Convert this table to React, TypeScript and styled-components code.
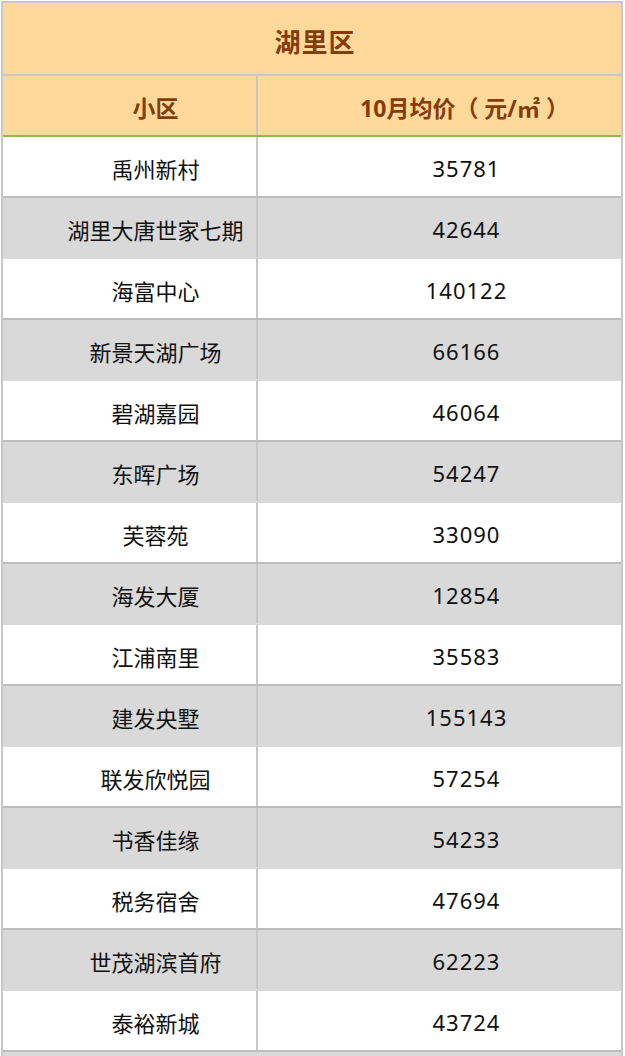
import * as React from 'react';
import styled, { createGlobalStyle } from 'styled-components';

const GlobalStyle = createGlobalStyle`
  html, body {
    margin: 0;
    padding: 0;
    background: #ffffff;
  }
  body {
    font-family: "Noto Sans", "Noto Sans CJK SC", sans-serif;
  }
`;

const PEACH = '#FFD99A';
const BROWN = '#843C0C';
const GRID = '#C8C8C8';

interface Row {
  name: string;
  price: number;
}

const rows: Row[] = [
  { name: '禹州新村', price: 35781 },
  { name: '湖里大唐世家七期', price: 42644 },
  { name: '海富中心', price: 140122 },
  { name: '新景天湖广场', price: 66166 },
  { name: '碧湖嘉园', price: 46064 },
  { name: '东晖广场', price: 54247 },
  { name: '芙蓉苑', price: 33090 },
  { name: '海发大厦', price: 12854 },
  { name: '江浦南里', price: 35583 },
  { name: '建发央墅', price: 155143 },
  { name: '联发欣悦园', price: 57254 },
  { name: '书香佳缘', price: 54233 },
  { name: '税务宿舍', price: 47694 },
  { name: '世茂湖滨首府', price: 62223 },
  { name: '泰裕新城', price: 43724 },
];

const Sheet = styled.div`
  box-sizing: border-box;
  width: 622px;
  margin: 1px 0 0 1px;
  border-top: 2px solid ${GRID};
  border-left: 2px solid ${GRID};
  border-right: 2px solid ${GRID};
  background: #d9d9d9;
  padding-bottom: 4px;
`;

const TitleRow = styled.div`
  box-sizing: border-box;
  height: 73px;
  display: flex;
  align-items: center;
  justify-content: center;
  background: ${PEACH};
  border-bottom: 2px solid ${GRID};
  color: ${BROWN};
  font-size: 26px;
  font-weight: 700;
  letter-spacing: 1px;
  padding: 4px 0 0 6px;
`;

const GridRow = styled.div<{ $bg: string; $line: string }>`
  box-sizing: border-box;
  height: 61px;
  display: grid;
  grid-template-columns: 255px 1fr;
  background: ${(p) => p.$bg};
  border-bottom: 2px solid ${(p) => p.$line};
`;

/* text in the source sheet sits a little right of each cell's centre */
const Cell = styled.div<{ $head?: boolean; $divider?: boolean; $num?: boolean; $shift: number }>`
  display: flex;
  align-items: center;
  justify-content: center;
  padding: 2px 0 0 ${(p) => p.$shift}px;
  border-right: ${(p) => (p.$divider ? `2px solid ${GRID}` : 'none')};
  color: ${(p) => (p.$head ? BROWN : '#111111')};
  font-size: ${(p) => (p.$head ? '23px' : '22px')};
  font-weight: ${(p) => (p.$head ? 700 : 400)};
  letter-spacing: ${(p) => (p.$num ? '1px' : '0')};
  white-space: nowrap;
`;

export default function App() {
  return (
    <>
      <GlobalStyle />
      <Sheet>
        <TitleRow>湖里区</TitleRow>
        <GridRow $bg={PEACH} $line="#8BB858">
          <Cell $head $divider $shift={52}>小区</Cell>
          <Cell $head $shift={50}>10月均价（ 元/㎡ ）</Cell>
        </GridRow>
        {rows.map((r, i) => (
          <GridRow key={r.name} $bg={i % 2 === 1 ? '#D9D9D9' : '#FFFFFF'} $line={i % 2 === 1 ? '#D9D9D9' : '#BDBDBD'}>
            <Cell $divider $shift={52}>{r.name}</Cell>
            <Cell $num $shift={54}>{r.price}</Cell>
          </GridRow>
        ))}
      </Sheet>
    </>
  );
}
